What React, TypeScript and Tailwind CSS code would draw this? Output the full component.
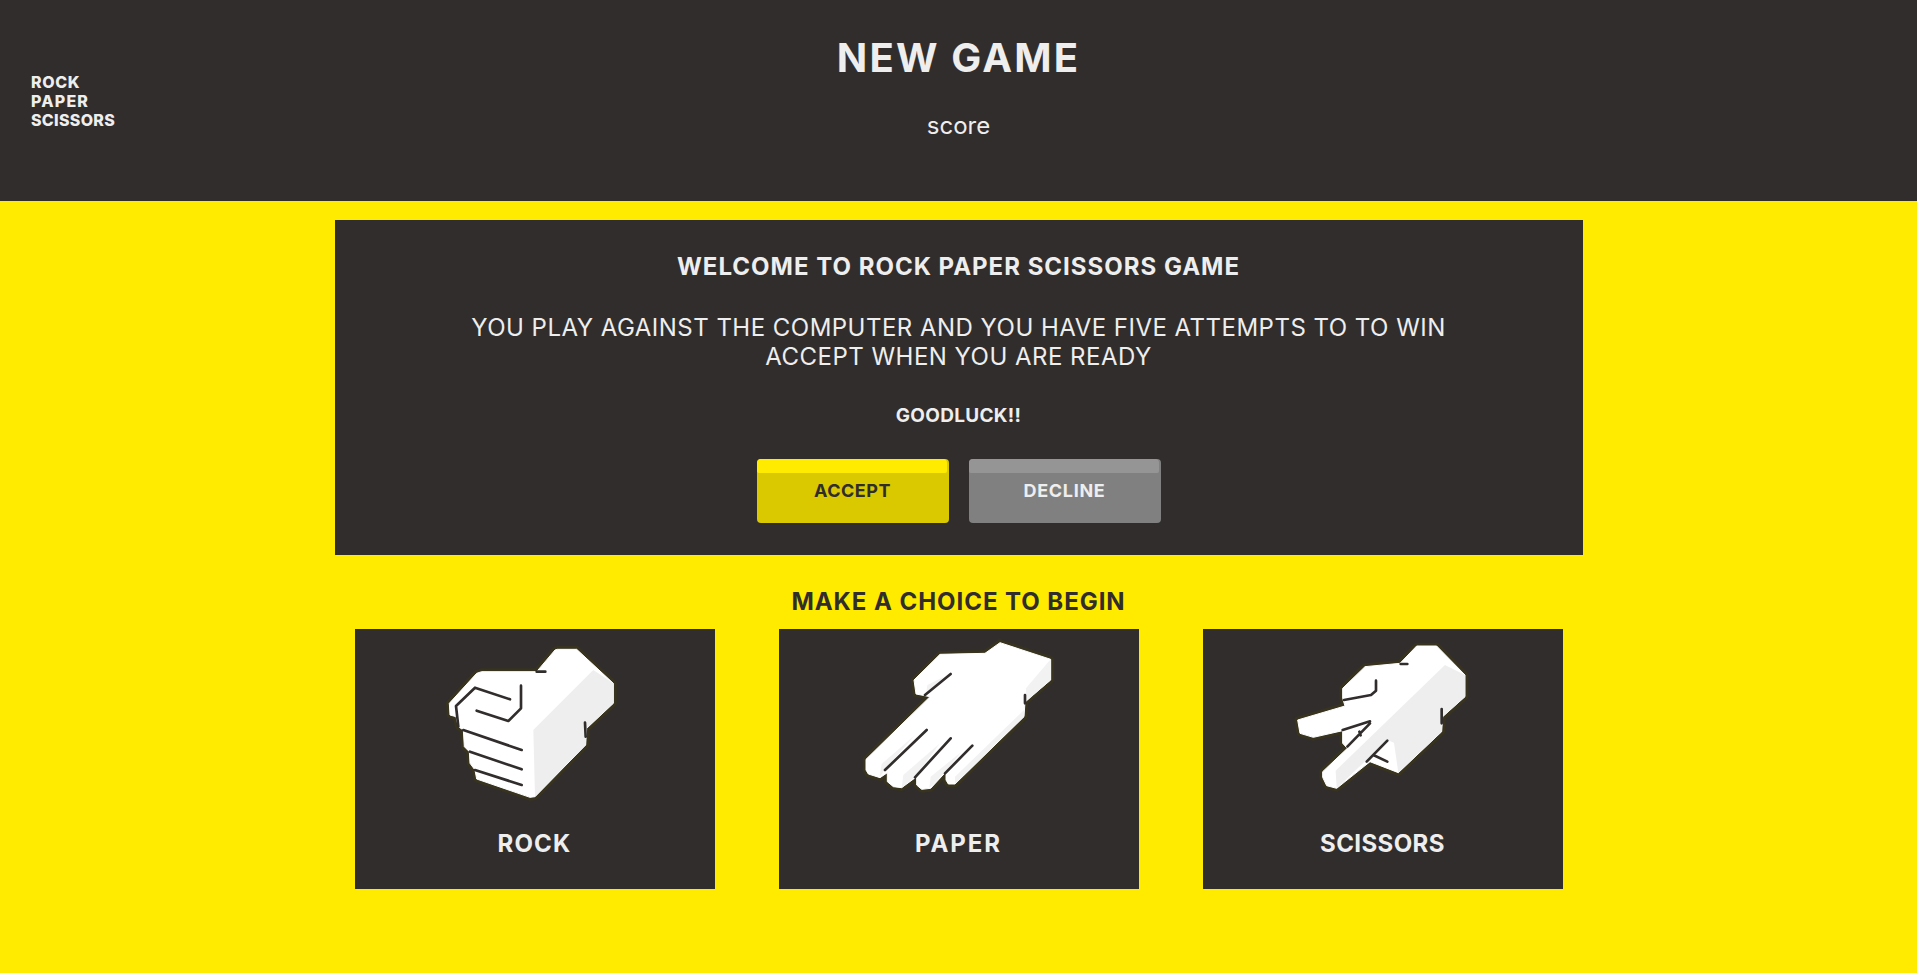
const DARK = "#312d2d";
const HALO = "#37331f";
const SHADE = "#eeeeee";

function Lines({ d }: { d: string }) {
  return <path d={d} fill="none" stroke={DARK} strokeWidth={8} strokeLinecap="round" strokeLinejoin="round" />;
}

function Sil({ d }: { d: string }) {
  return <path d={d} fill="#ffffff" stroke="#ffffff" strokeWidth={3} strokeLinejoin="round" />;
}

function Halo({ d }: { d: string }) {
  return <path d={d} fill={HALO} stroke={HALO} strokeWidth={20} strokeLinejoin="round" />;
}

function RockIcon() {
  const s = "M405 90 L412 88 L470 88 L580 190 L580 250 L500 325 L497 375 L345 530 L330 532 L170 477 L165 450 L150 430 L148 395 L133 380 L130 330 L115 320 L108 290 L90 285 L88 250 L170 160 L185 155 L350 155 Z";
  return (
    <svg className="block mx-auto" width={240} height={181} viewBox="-15 27 720 543">
      <Halo d={s} />
      <Sil d={s} />
      <path d="M520 150 L580 190 L580 250 L500 325 L497 375 L345 530 L340 330 Z" fill={SHADE} />
      <Lines d="M270 238 L165 203 L108 258 L115 320 M170 272 L265 303 L303 265 L303 197 M130 330 L305 390 M150 395 L305 448 M165 450 L305 495 M350 155 L376 155 M495 308 L497 350" />
    </svg>
  );
}

function PaperIcon() {
  const s = "M300 103 L435 100 L480 68 L632 118 L632 180 L555 245 L552 290 L345 492 L325 492 L318 480 L318 455 L272 505 L245 508 L230 495 L230 470 L185 503 L160 500 L142 485 L142 458 L120 473 L85 462 L78 450 L78 418 L270 230 L228 222 L222 180 Z";
  return (
    <svg className="block mx-auto" width={240} height={181} viewBox="-3 27 720 543">
      <Halo d={s} />
      <Sil d={s} />
      <path d="M632 118 L632 180 L558 245 L558 205 Z" fill="#f2f2f2" />
      <path d="M258 225 L262 195 L312 170 Z" fill="#f2f2f2" />
      <path d="M118 473 L125 432 L225 345 L135 448 Z" fill="#f2f2f2" />
      <path d="M185 503 L190 465 L300 370 L225 470 Z" fill="#f2f2f2" />
      <path d="M268 505 L272 470 L365 395 L315 455 Z" fill="#f2f2f2" />
      <path d="M345 492 L552 290 L552 270 L345 470 Z" fill="#f2f2f2" />
      <Lines d="M135 450 L260 330 M225 472 L332 355 M315 460 L397 377 M255 225 L332 162 M555 225 L555 250" />
    </svg>
  );
}

function ScissorsIcon() {
  const s = "M218 205 L285 140 L390 130 L440 78 L500 78 L585 165 L585 230 L518 290 L515 335 L385 458 L300 425 L200 505 L170 497 L158 472 L158 455 L232 385 L218 370 L218 332 L130 352 L90 340 L83 300 L225 258 L218 235 Z";
  return (
    <svg className="block mx-auto" width={240} height={181} viewBox="-21 27 720 543">
      <Halo d={s} />
      <Sil d={s} />
      <path d="M525 135 L585 165 L585 230 L518 290 L515 335 L385 458 L372 368 L352 360 L200 505 L197 452 Z" fill={SHADE} />
      <Lines d="M318 182 L318 212 L303 225 L222 240 M300 304 L218 330 M300 310 L232 380 M352 362 L290 425 M310 405 L352 425 M515 267 L515 310 M392 132 L412 132 M268 335 L272 346" />
    </svg>
  );
}

function Card({ label, tracking, children }: { label: string; tracking: string; children: React.ReactNode }) {
  return (
    <div className="w-[360px] h-[260px] bg-[#312d2d] flex flex-col items-center">
      {children}
      <div className={"mt-[19px] text-[24px] leading-[29px] font-bold text-[#eeeeee] " + tracking}>{label}</div>
    </div>
  );
}

export default function App() {
  return (
    <div className="min-h-screen bg-[#ffeb00] font-['Inter',sans-serif]">
      <header className="relative h-[201px] bg-[#312d2d] text-center text-[#eeeeee]">
        <div className="absolute left-[31px] top-[73px] text-left text-[16px] leading-[19px] font-extrabold">
          <div className="tracking-[0.6px]">ROCK</div>
          <div className="tracking-[1.2px]">PAPER</div>
          <div className="tracking-[0.3px]">SCISSORS</div>
        </div>
        <h1 className="pt-[33px] text-[40px] leading-[49px] font-bold tracking-[2.2px]">NEW GAME</h1>
        <p className="mt-[29px] text-[24px] leading-[29px] font-normal">score</p>
      </header>
      <main className="w-[1248px] mx-auto pt-[19px]">
        <section className="h-[335px] bg-[#312d2d] text-center text-[#eeeeee] pt-[32px]">
          <h2 className="text-[24px] leading-[29px] font-bold tracking-[1px]">WELCOME TO ROCK PAPER SCISSORS GAME</h2>
          <p className="mt-[32px] text-[24px] leading-[29px] font-normal tracking-[0.48px]">
            YOU PLAY AGAINST THE COMPUTER AND YOU HAVE FIVE ATTEMPTS TO TO WIN
            <br />
            ACCEPT WHEN YOU ARE READY
          </p>
          <p className="mt-[33px] text-[19px] leading-[23px] font-bold tracking-[0.3px]">GOODLUCK!!</p>
          <div className="mt-[32px] flex justify-center gap-[20px]">
            <button className="relative w-[192px] h-[64px] rounded-[4px] bg-[#dac800] text-[#312d2d] text-[18px] font-bold tracking-[0.5px] pb-[2px]">
              <span className="absolute left-0 right-[2px] top-0 h-[14px] rounded-t-[4px] rounded-b-[2px] bg-[#ffeb00]" />
              ACCEPT
            </button>
            <button className="relative w-[192px] h-[64px] rounded-[4px] bg-[#808080] text-[#eeeeee] text-[18px] font-bold tracking-[0.7px] pb-[2px]">
              <span className="absolute left-0 right-[2px] top-0 h-[14px] rounded-t-[4px] rounded-b-[2px] bg-[#959595]" />
              DECLINE
            </button>
          </div>
        </section>
        <h3 className="mt-[32px] text-center text-[24px] leading-[29px] font-bold text-[#312d2d] tracking-[0.95px]">MAKE A CHOICE TO BEGIN</h3>
        <div className="mt-[13px] flex justify-center gap-[64px]">
          <Card label="ROCK" tracking="tracking-[1.2px]"><RockIcon /></Card>
          <Card label="PAPER" tracking="tracking-[1.9px]"><PaperIcon /></Card>
          <Card label="SCISSORS" tracking="tracking-[0.4px]"><ScissorsIcon /></Card>
        </div>
      </main>
    </div>
  );
}
